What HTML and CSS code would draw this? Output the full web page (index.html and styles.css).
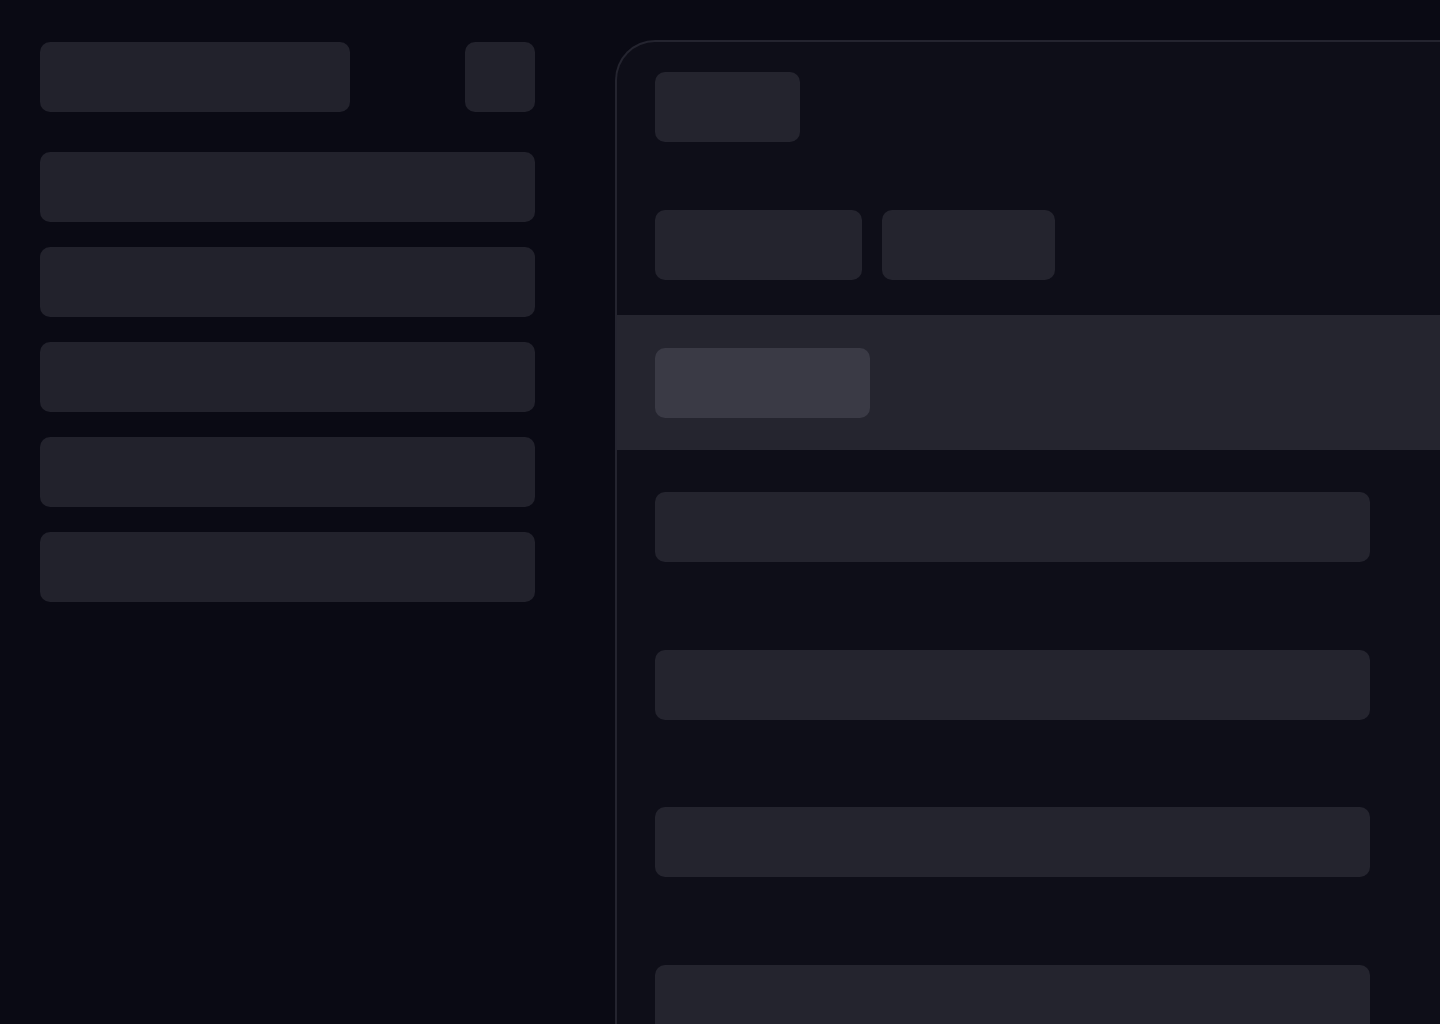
FILE: index.html
```html
<!DOCTYPE html>
<html lang="en">
<head>
    <meta charset="UTF-8">
    <title>Loading</title>
    <link rel="stylesheet" href="styles.css">
</head>
<body>
    <div class="layout">
        <aside class="sidebar">
            <div class="sidebar-top">
                <div class="bone title"></div>
                <div class="bone square"></div>
            </div>
            <div class="sidebar-list">
                <div class="bone item"></div>
                <div class="bone item"></div>
                <div class="bone item"></div>
                <div class="bone item"></div>
                <div class="bone item"></div>
            </div>
        </aside>

        <main class="panel">
            <div class="panel-head">
                <div class="bone heading"></div>
                <div class="tabs">
                    <div class="bone tab-one"></div>
                    <div class="bone tab-two"></div>
                </div>
            </div>
            <div class="band">
                <div class="bone band-box"></div>
            </div>
            <div class="rows">
                <div class="bone row"></div>
                <div class="bone row"></div>
                <div class="bone row"></div>
                <div class="bone row"></div>
            </div>
        </main>
    </div>
</body>
</html>
```

FILE: styles.css
```css
html, body {
    margin: 0;
    height: 100%;
    overflow: hidden;
}

body {
    background-color: #0a0a14;
    font-family: "Liberation Sans", Arial, sans-serif;
}

.layout {
    display: flex;
    gap: 80px;
    padding: 40px 0 0 40px;
}

.bone {
    height: 70px;
    border-radius: 10px;
    background-color: #22222c;
}

.sidebar {
    width: 495px;
    flex-shrink: 0;
    padding-top: 2px;
}

.sidebar-top {
    display: flex;
    justify-content: space-between;
}

.title {
    width: 310px;
}

.square {
    width: 70px;
}

.sidebar-list {
    display: flex;
    flex-direction: column;
    gap: 25px;
    margin-top: 40px;
}

/* panel is cut off by the right and bottom edges of the window */
.panel {
    width: 825px;
    height: 984px;
    box-sizing: border-box;
    overflow: hidden;
    border: 2px solid #24242f;
    border-right: none;
    border-bottom: none;
    border-radius: 40px 0 0 0;
    background-color: #0e0e18;
}

.panel .bone {
    background-color: #24242e;
}

.panel-head {
    padding: 30px 38px 35px;
}

.heading {
    width: 145px;
}

.tabs {
    display: flex;
    gap: 20px;
    margin-top: 68px;
}

.tab-one {
    width: 207px;
}

.tab-two {
    width: 173px;
}

.band {
    background-color: #25252f;
    padding: 33px 38px 32px;
}

.panel .band-box {
    width: 215px;
    background-color: #3a3a45;
}

.rows {
    display: flex;
    flex-direction: column;
    gap: 87.5px;
    padding: 42px 38px;
}

.row {
    width: 715px;
    flex-shrink: 0;
}
```
